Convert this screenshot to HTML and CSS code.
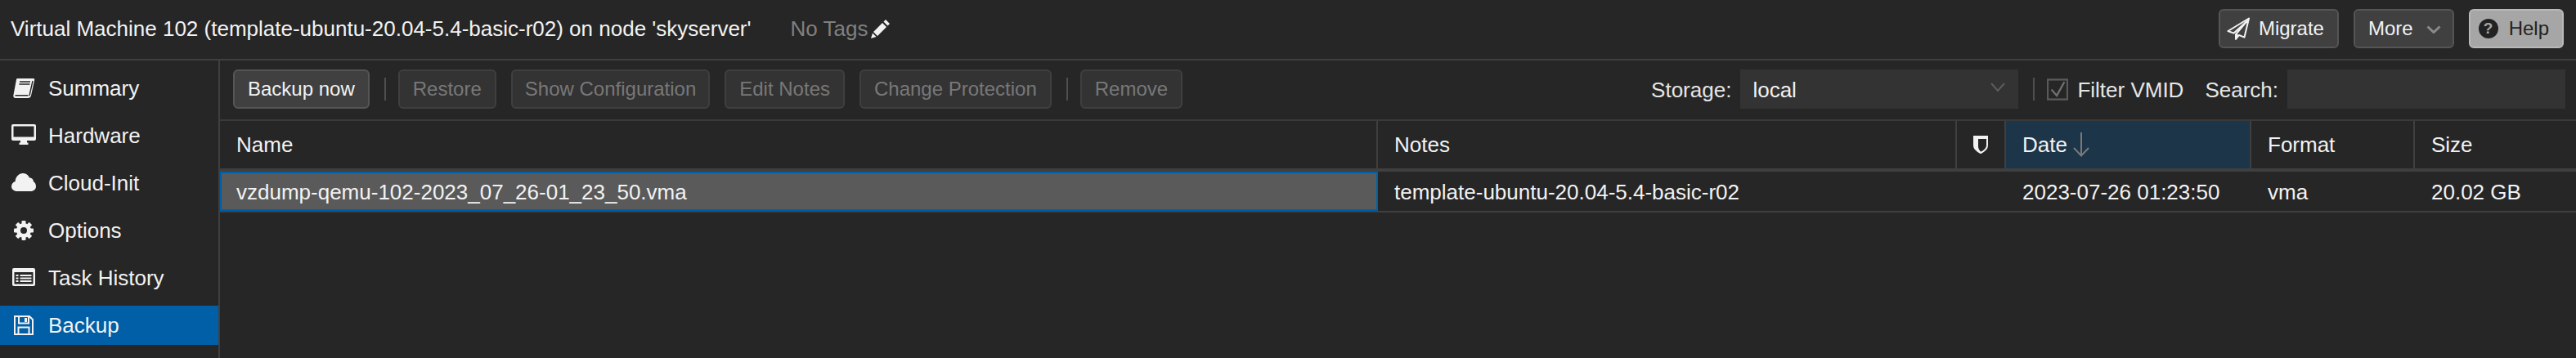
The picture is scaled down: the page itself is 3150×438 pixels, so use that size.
FILE: index.html
```html
<!DOCTYPE html>
<html lang="en">

<head>
  <meta charset="UTF-8">
  <title>Virtual Machine 102 - Backup</title>
  <link rel="stylesheet" href="styles.css">
</head>

<body>
  <header class="top-bar">
    <span class="vm-title">Virtual Machine 102 (template-ubuntu-20.04-5.4-basic-r02) on node 'skyserver'</span>
    <span class="no-tags">No Tags</span>
    <svg class="pencil" viewBox="0 0 24 24"><path d="M18 1l5 5-2.500 2.500-5-5zM14 5l5 5L8 21l-5-5zM2 17.500l4.500 4.500L0 24z" fill="#f2f2f2"/></svg>
    <span class="spacer"></span>
    <button class="btn">
      <svg class="plane" viewBox="0 0 28 28">
        <path d="M27 1.500L1.500 17l7 2.600L24.500 5 11 21l0 6 4-5 6.500 2.600z" fill="none" stroke="#f2f2f2" stroke-width="2" stroke-linejoin="round"/>
        <path d="M11 20l0 7 4-5z" fill="#f2f2f2"/>
      </svg>
      Migrate
    </button>
    <button class="btn btn-more">
      More
      <svg class="chevron" viewBox="0 0 18 10"><path d="M1.500 1.500L9 8.500l7.500-7" fill="none" stroke="#8a8a8a" stroke-width="3"/></svg>
    </button>
    <button class="btn btn-help"><span class="help-mark">?</span>Help</button>
  </header>

  <div class="content">
    <nav class="side-nav">
      <a class="nav-item">
        <svg viewBox="0 0 30 30">
          <path d="M7 3h20c1 0 1.500.8 1.200 1.800L24 24c-.5 2-2 3-4 3H5c-2.200 0-3-1.600-2.600-3.500L6 4.500C6.200 3.600 6.500 3 7 3z" fill="#f2f2f2"/>
          <path d="M10 7h13M9.500 10h13M4.500 23.800H20.500M26 6l-4 18" fill="none" stroke="#262626" stroke-width="1.400"/>
        </svg>
        Summary
      </a>
      <a class="nav-item">
        <svg viewBox="0 0 30 30">
          <path d="M2 1h26a2 2 0 0 1 2 2v16a2 2 0 0 1-2 2h-9v2.500h1.500V26h-11v-2.500H11V21H2a2 2 0 0 1-2-2V3a2 2 0 0 1 2-2zM2.500 3.500v13h25v-13z" fill="#f2f2f2" fill-rule="evenodd"/>
        </svg>
        Hardware
      </a>
      <a class="nav-item">
        <svg viewBox="0 0 30 30">
          <path d="M7 25C3 25 0 22.500 0 19c0-3 2-5.300 4.700-6C4.800 7.500 9 3 14 3c3.600 0 6.700 2.100 8 5.400 3 0 5 2.200 5 4.800 1.800 1.100 3 3.200 3 5.800 0 3.500-2.700 6-6.500 6z" fill="#f2f2f2"/>
        </svg>
        Cloud-Init
      </a>
      <a class="nav-item">
        <svg viewBox="0 0 30 30">
          <g fill="#f2f2f2">
            <rect x="12.500" y="3" width="5" height="24" rx="1"/>
            <rect x="12.500" y="3" width="5" height="24" rx="1" transform="rotate(45 15 15)"/>
            <rect x="12.500" y="3" width="5" height="24" rx="1" transform="rotate(90 15 15)"/>
            <rect x="12.500" y="3" width="5" height="24" rx="1" transform="rotate(135 15 15)"/>
            <circle cx="15" cy="15" r="9"/>
          </g>
          <circle cx="15" cy="15" r="4" fill="#262626"/>
        </svg>
        Options
      </a>
      <a class="nav-item">
        <svg viewBox="0 0 30 30">
          <path d="M3 3h24a2 2 0 0 1 2 2v18a2 2 0 0 1-2 2H3a2 2 0 0 1-2-2V5a2 2 0 0 1 2-2zM3.500 8v14.500h23V8z" fill="#f2f2f2" fill-rule="evenodd"/>
          <path d="M5.500 11h3v2h-3zM10.500 11h14v2h-14zM5.500 14.500h3v2h-3zM10.500 14.500h14v2h-14zM5.500 18h3v2h-3zM10.500 18h14v2h-14z" fill="#f2f2f2"/>
        </svg>
        Task History
      </a>
      <a class="nav-item active">
        <svg viewBox="0 0 30 30">
          <path d="M4 4h18l4 4v18H4z" fill="none" stroke="#f2f2f2" stroke-width="2"/>
          <path d="M9 4.500v8h12v-8M8.500 26v-8.500h13V26" fill="none" stroke="#f2f2f2" stroke-width="2"/>
          <path d="M16 6h3v5h-3z" fill="#f2f2f2"/>
        </svg>
        Backup
      </a>
    </nav>

    <main class="panel">
      <div class="toolbar">
        <button class="btn">Backup now</button>
        <span class="sep"></span>
        <button class="btn" disabled>Restore</button>
        <button class="btn btn-tight" disabled>Show Configuration</button>
        <button class="btn" disabled>Edit Notes</button>
        <button class="btn" disabled>Change Protection</button>
        <span class="sep"></span>
        <button class="btn" disabled>Remove</button>
        <span class="spacer"></span>
        <label class="field-label">Storage:</label>
        <div class="field field-select">
          local
          <svg class="select-arrow" viewBox="0 0 18 12"><path d="M1 1l8 9 8-9" fill="none" stroke="#5c5c5c" stroke-width="2"/></svg>
        </div>
        <span class="sep"></span>
        <label class="check">
          <svg class="check-box" viewBox="0 0 28 28">
            <rect x="1" y="1" width="26" height="26" fill="none" stroke="#5a5a5a" stroke-width="2.500"/>
            <path d="M6 14l7 8L23 4" fill="none" stroke="#707070" stroke-width="2.500"/>
          </svg>
          Filter VMID
        </label>
        <label class="field-label search-label">Search:</label>
        <div class="field field-search"></div>
      </div>

      <div class="grid-row grid-head">
        <div class="cell">Name</div>
        <div class="cell">Notes</div>
        <div class="cell cell-icon">
          <svg class="shield" viewBox="0 0 18 22"><path d="M1 1h16v11c0 4-4 7-8 9-4-2-8-5-8-9z" fill="none" stroke="#f2f2f2" stroke-width="2"/><path d="M1 1h8v3H6v9c0 3 1.500 5 3 6.500V21c-4-2-8-5-8-9z" fill="#f2f2f2"/><path d="M1 1h16v3H1zM1 1h5v14H1z" fill="#f2f2f2"/></svg>
        </div>
        <div class="cell cell-sorted">Date
          <svg class="sort-arrow" viewBox="0 0 20 30"><path d="M10 0v28M1 19l9 9.500 9-9.500" fill="none" stroke="#7a7a7a" stroke-width="2"/></svg>
        </div>
        <div class="cell">Format</div>
        <div class="cell">Size</div>
      </div>

      <div class="grid-row grid-data">
        <div class="cell cell-focus">vzdump-qemu-102-2023_07_26-01_23_50.vma</div>
        <div class="cell">template-ubuntu-20.04-5.4-basic-r02</div>
        <div class="cell"></div>
        <div class="cell">2023-07-26 01:23:50</div>
        <div class="cell">vma</div>
        <div class="cell">20.02 GB</div>
      </div>
    </main>
  </div>
</body>

</html>
```

FILE: styles.css
```css
* {
  box-sizing: border-box;
}

html,
body {
  height: 100%;
  margin: 0;
  overflow: hidden;
}

body {
  display: flex;
  flex-direction: column;
  background: #262626;
  color: #f2f2f2;
  font: 26px "Liberation Sans", Arial, sans-serif;
}

.spacer {
  flex: 1;
}

/* top bar */
.top-bar {
  height: 74px;
  flex: none;
  display: flex;
  align-items: center;
  padding: 0 15px 2px 13px;
  border-bottom: 2px solid #3f3f3f;
}

.no-tags {
  margin-left: 48px;
  color: #808080;
}

.pencil {
  width: 24px;
  height: 24px;
  margin-left: 4px;
}

.btn {
  height: 48px;
  display: flex;
  align-items: center;
  padding: 0 16px;
  background: #404040;
  border: 2px solid #555;
  border-radius: 6px;
  color: #f2f2f2;
  font: 24px "Liberation Sans", Arial, sans-serif;
}

.btn:disabled {
  background: #333;
  border-color: #3f3f3f;
  color: #787878;
}

.btn-tight {
  padding: 0 15px;
}

.top-bar .btn + .btn {
  margin-left: 18px;
}

.top-bar .btn-help {
  margin-left: 17px;
}

.plane {
  width: 28px;
  height: 28px;
  margin: 0 11px 0 -8px;
}

.chevron {
  width: 18px;
  height: 10px;
  margin: 2px -2px 0 16px;
}

.btn-help {
  padding: 0 16px 0 10px;
  background: #a6a6a6;
  border-color: #b8b8b8;
  color: #222;
}

.help-mark {
  width: 24px;
  height: 24px;
  margin-right: 13px;
  border-radius: 50%;
  background: #222;
  color: #a6a6a6;
  font-size: 19px;
  font-weight: bold;
  line-height: 24px;
  text-align: center;
}

/* left menu */
.content {
  flex: 1;
  display: flex;
  min-height: 0;
}

.side-nav {
  width: 269px;
  flex: none;
  display: flex;
  flex-direction: column;
  gap: 10px;
  padding-top: 10px;
  border-right: 2px solid #3f3f3f;
}

.nav-item {
  height: 48px;
  display: flex;
  align-items: center;
  gap: 15px;
  padding-left: 14px;
  color: #f2f2f2;
}

.nav-item svg {
  width: 30px;
  height: 30px;
}

.nav-item.active {
  background: #005fa6;
}

/* toolbar */
.panel {
  flex: 1;
  min-width: 0;
}

.toolbar {
  height: 74px;
  display: flex;
  align-items: center;
  gap: 18px;
  padding: 0 13px 2px 16px;
  border-bottom: 2px solid #3a3a3a;
}

.sep {
  width: 2px;
  height: 28px;
  margin-right: -3px;
  background: #4f4f4f;
}

.field-label {
  margin-right: -7px;
  padding-top: 2px;
  color: #e6e6e6;
}

.field {
  height: 48px;
  background: #333;
}

.field-select {
  width: 340px;
  display: flex;
  align-items: center;
  justify-content: space-between;
  padding: 2px 16px 0 15px;
}

.select-arrow {
  width: 18px;
  height: 12px;
  margin-top: -6px;
}

.check {
  display: flex;
  align-items: center;
  gap: 11px;
  padding-top: 2px;
  color: #e6e6e6;
}

.check-box {
  width: 26px;
  height: 27px;
  margin-top: -2px;
}

.search-label {
  margin-left: 8px;
}

.field-search {
  width: 340px;
}

/* grid */
.grid-row {
  display: grid;
  grid-template-columns: 1416px 708px 60px 300px 200px 1fr;
}

.grid-head {
  height: 62px;
  border-bottom: 4px solid #3f3f3f;
}

.grid-head .cell {
  border-right: 2px solid #3f3f3f;
}

.grid-head .cell:last-child {
  border-right: 0;
}

.cell {
  display: flex;
  align-items: center;
  padding-left: 20px;
  white-space: nowrap;
}

.cell-icon {
  padding-left: 0;
  justify-content: center;
}

.shield {
  width: 18px;
  height: 22px;
}

.cell-sorted {
  background: #1c3549;
}

.sort-arrow {
  width: 20px;
  height: 30px;
  margin-left: 7px;
}

.grid-data {
  height: 50px;
  border-bottom: 2px solid #3f3f3f;
}

.grid-data .cell {
  padding-top: 2px;
}

.cell-focus {
  padding-left: 18px;
  background: #5a5a5a;
  border: 2px solid #005fa6;
}
```
